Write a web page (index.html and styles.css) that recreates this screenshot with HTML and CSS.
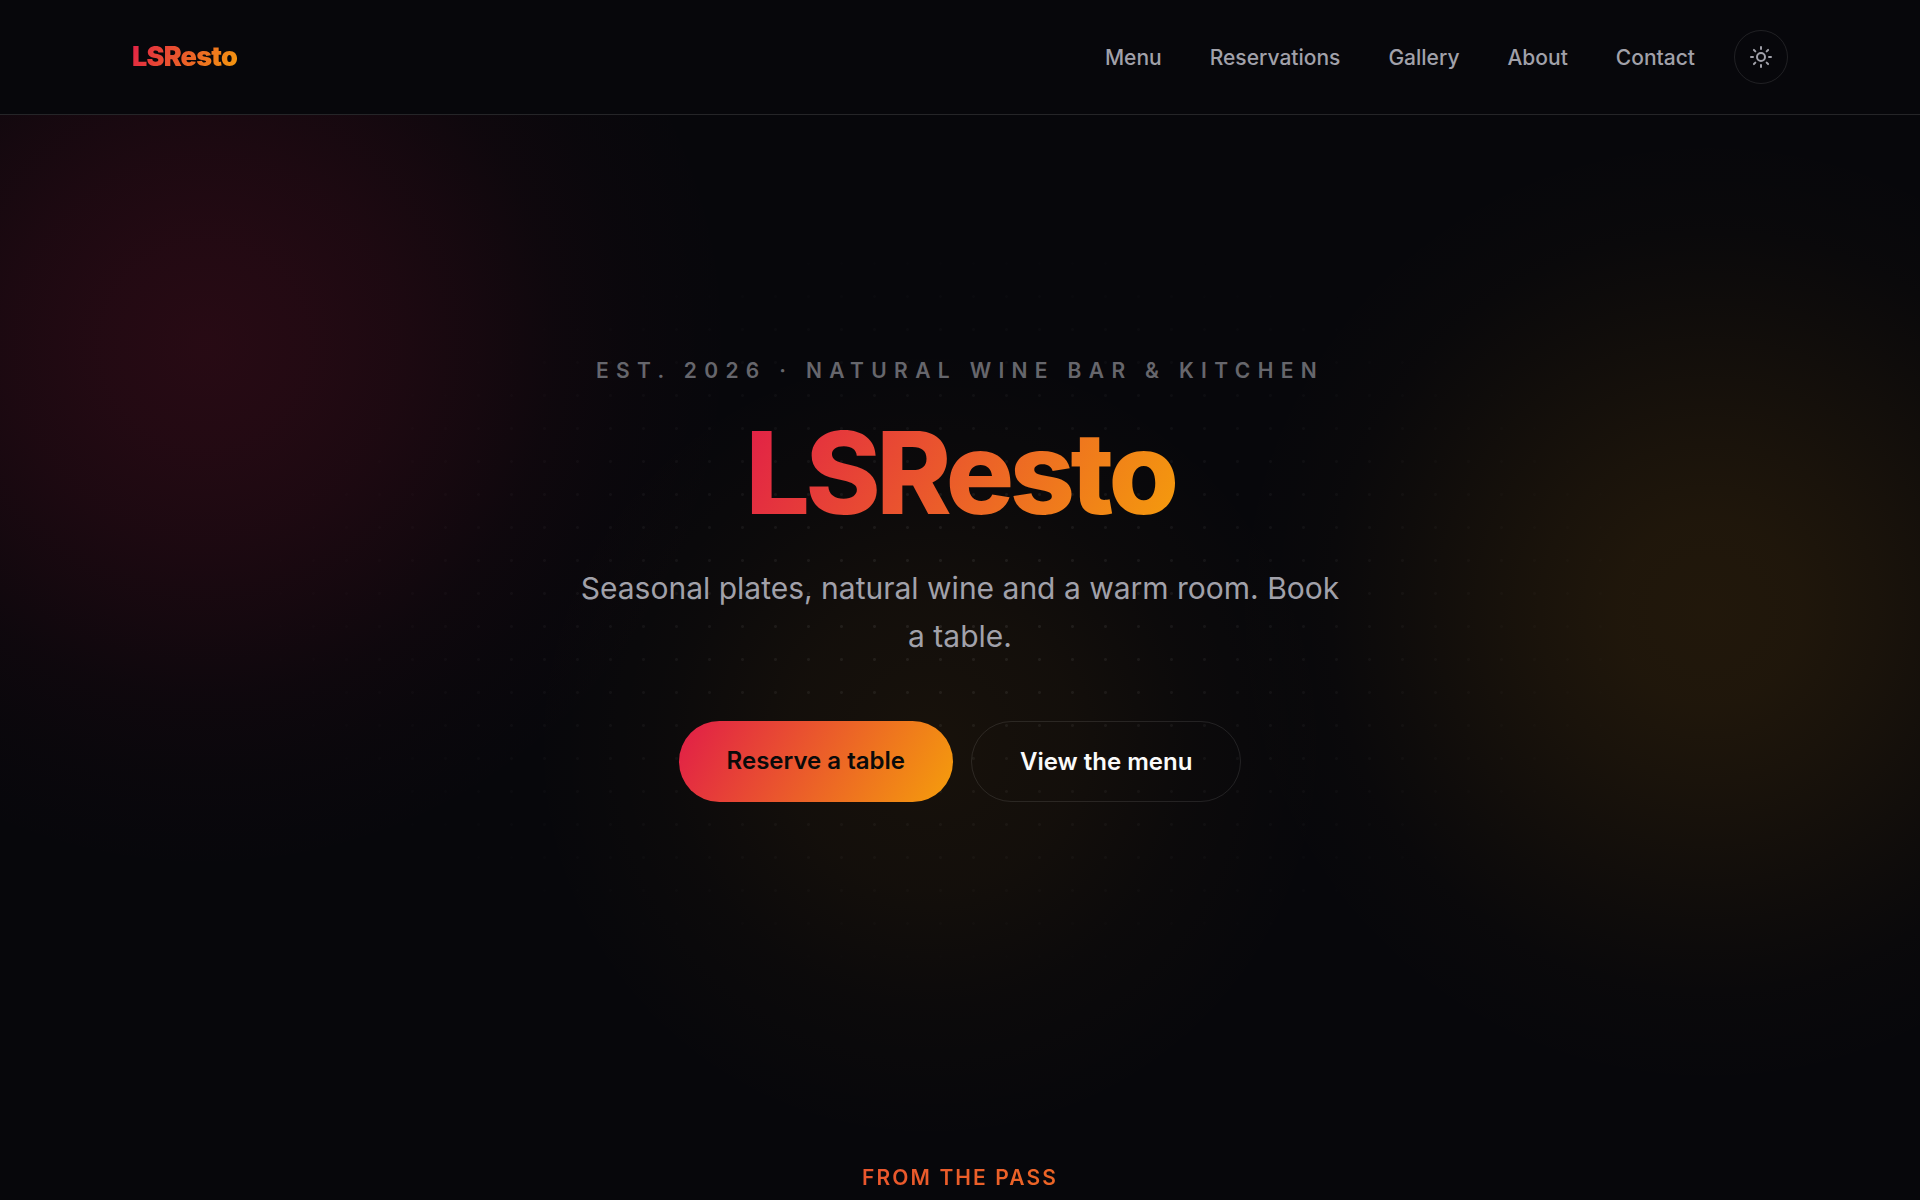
FILE: index.html
```html
<!DOCTYPE html>
<html lang="en">
<head>
	<meta charset="utf-8">
	<meta name="viewport" content="width=device-width, initial-scale=1">
	<title>LSResto</title>
	<link rel="stylesheet" href="styles.css">
</head>
<body>

<header class="site-header">
	<div class="container header-inner">
		<a class="brand gradient-text" href="#">LSResto</a>
		<div class="header-right">
			<nav class="site-nav" aria-label="Main">
				<a href="#menu">Menu</a>
				<a href="#reservations">Reservations</a>
				<a href="#gallery">Gallery</a>
				<a href="#about">About</a>
				<a href="#contact">Contact</a>
			</nav>
			<button class="theme-toggle" type="button" aria-label="Toggle theme">
				<svg viewBox="0 0 24 24" width="24" height="24" fill="none" stroke="currentColor" stroke-width="2" stroke-linecap="round" aria-hidden="true">
					<circle cx="12" cy="12" r="4"/>
					<path d="M12 2v2M12 20v2M4.93 4.93l1.41 1.41M17.66 17.66l1.41 1.41M2 12h2M20 12h2M6.34 17.66l-1.41 1.41M19.07 4.93l-1.41 1.41"/>
				</svg>
			</button>
		</div>
	</div>
</header>

<main>
	<section class="hero">
		<p class="eyebrow">Est. 2026 · Natural wine bar &amp; kitchen</p>
		<h1 class="gradient-text">LSResto</h1>
		<p class="lead">Seasonal plates, natural wine and a warm room. Book a table.</p>
		<div class="actions">
			<a class="btn btn-primary" href="#reservations">Reserve a table</a>
			<a class="btn btn-ghost" href="#menu">View the menu</a>
		</div>
	</section>

	<section class="pass" id="menu">
		<div class="container">
			<p class="section-label gradient-text">From the pass</p>
		</div>
	</section>
</main>

</body>
</html>
```

FILE: styles.css
```css
/* Base */

* { box-sizing: border-box; margin: 0; padding: 0; }

:root {
	--bg: #07070b;
	--text: #fafafa;
	--muted: #a1a1aa;
	--dim: #66666c;
	--line: rgba(255, 255, 255, 0.1);
	--accent: linear-gradient(120deg, #e11d48, #f59e0b);
}

body {
	background: var(--bg);
	color: var(--text);
	font-family: Inter, "Liberation Sans", sans-serif;
	font-size: 22px;
	line-height: 1.6;
}

a {
	color: inherit;
	text-decoration: none;
}

.container {
	max-width: 1744px;
	margin: 0 auto;
	padding: 0 44px;
}

.gradient-text {
	background: var(--accent);
	-webkit-background-clip: text;
	background-clip: text;
	color: transparent;
}


/* Header */

.site-header {
	border-bottom: 1px solid rgba(255, 255, 255, 0.12);
	padding: 30px 0;
}

.header-inner, .header-right, .site-nav {
	display: flex;
	align-items: center;
}

.header-inner {
	justify-content: space-between;
}

.header-right {
	gap: 39px;
}

.site-nav {
	gap: 48px;
	color: var(--muted);
	font-size: 21px;
	font-weight: 500;
	line-height: 35px;
}

.brand {
	font-size: 27px;
	font-weight: 900;
	letter-spacing: -0.03em;
}

.theme-toggle {
	display: grid;
	place-items: center;
	width: 54px;
	height: 54px;
	border: 1px solid var(--line);
	border-radius: 50%;
	background: none;
	color: var(--muted);
}


/* Hero */

.hero {
	position: relative;
	isolation: isolate;
	display: flex;
	flex-direction: column;
	align-items: center;
	justify-content: center;
	min-height: 990px;
	padding: 66px 44px 130px;
	text-align: center;
}

/* glow and dot grid sit behind the text */
.hero:before, .hero:after {
	content: "";
	position: absolute;
	inset: 0;
	z-index: -1;
}

.hero:before {
	bottom: -90px;
	background:
		radial-gradient(circle 530px at 205px 230px,
			rgba(225, 29, 72, 0.15), rgba(225, 29, 72, 0.13) 19%, rgba(225, 29, 72, 0.1) 36%,
			rgba(225, 29, 72, 0.07) 51%, rgba(225, 29, 72, 0.035) 66%, rgba(225, 29, 72, 0.014) 80%, transparent),
		radial-gradient(circle 480px at 89% 497px,
			rgba(245, 158, 11, 0.11), rgba(245, 158, 11, 0.1) 19%, rgba(245, 158, 11, 0.08) 36%,
			rgba(245, 158, 11, 0.055) 51%, rgba(245, 158, 11, 0.03) 66%, rgba(245, 158, 11, 0.012) 80%, transparent),
		radial-gradient(circle 400px at 930px 630px,
			rgba(245, 158, 11, 0.07), rgba(245, 158, 11, 0.06) 19%, rgba(245, 158, 11, 0.05) 36%,
			rgba(245, 158, 11, 0.035) 51%, rgba(245, 158, 11, 0.02) 66%, rgba(245, 158, 11, 0.01) 80%, transparent);
}

.hero:after {
	background: radial-gradient(circle, rgba(255, 255, 255, 0.08) 1px, transparent 2px) 0 0 / 33px 33px;
	-webkit-mask-image: radial-gradient(ellipse at center, black, transparent 55%);
	mask-image: radial-gradient(ellipse at center, black, transparent 55%);
}

.eyebrow {
	color: var(--dim);
	font-size: 21px;
	font-weight: 600;
	letter-spacing: 0.35em;
	text-transform: uppercase;
}

/* side padding keeps the last letter inside the clipped background */
.hero h1 {
	margin: 23px 0 29px;
	padding: 0 6px;
	font-size: 114px;
	font-weight: 800;
	line-height: 1.1;
	letter-spacing: -0.04em;
}

.lead {
	max-width: 770px;
	color: var(--muted);
	font-size: 30px;
}

.actions {
	display: flex;
	flex-wrap: wrap;
	justify-content: center;
	gap: 18px;
	margin-top: 61px;
}

.btn {
	padding: 21px 48px;
	border-radius: 41px;
	font-size: 24px;
	font-weight: 600;
	line-height: 37px;
}

.btn-primary {
	background: var(--accent);
	color: #0a0a0a;
}

.btn-ghost {
	border: 1px solid var(--line);
}


/* From the pass */

.pass {
	padding-top: 56px;
	text-align: center;
}

.section-label {
	font-size: 21px;
	font-weight: 600;
	letter-spacing: 0.1em;
	text-transform: uppercase;
}
```
